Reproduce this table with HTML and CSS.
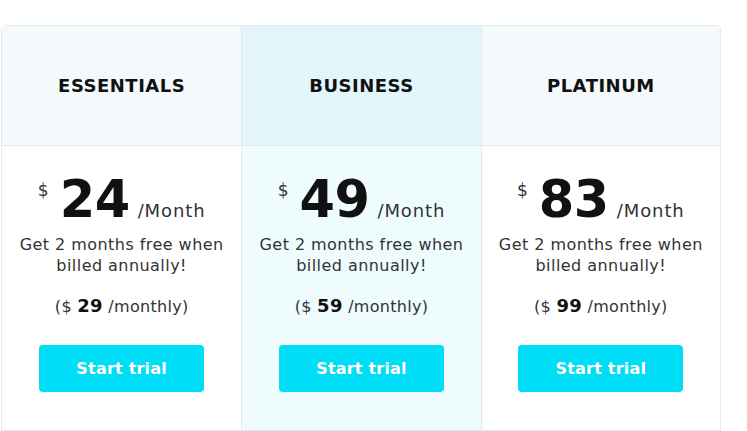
FILE: index.html
```html
<!DOCTYPE html>
<html lang="en">
<head>
<meta charset="utf-8">
<title>Pricing</title>
<link rel="stylesheet" href="styles.css">
</head>
<body>
<div class="pricing">
  <div class="plan">
    <div class="plan-head"><h2 class="plan-name">ESSENTIALS</h2></div>
    <div class="plan-body">
      <div class="price"><span class="cur">$</span><span class="amount">24</span><span class="per">/Month</span></div>
      <p class="note">Get 2 months free when billed annually!</p>
      <p class="monthly">($ <b>29</b> /monthly)</p>
      <a class="btn" href="#">Start trial</a>
    </div>
  </div>
  <div class="plan plan-featured">
    <div class="plan-head"><h2 class="plan-name">BUSINESS</h2></div>
    <div class="plan-body">
      <div class="price"><span class="cur">$</span><span class="amount">49</span><span class="per">/Month</span></div>
      <p class="note">Get 2 months free when billed annually!</p>
      <p class="monthly">($ <b>59</b> /monthly)</p>
      <a class="btn" href="#">Start trial</a>
    </div>
  </div>
  <div class="plan">
    <div class="plan-head"><h2 class="plan-name">PLATINUM</h2></div>
    <div class="plan-body">
      <div class="price"><span class="cur">$</span><span class="amount">83</span><span class="per">/Month</span></div>
      <p class="note">Get 2 months free when billed annually!</p>
      <p class="monthly">($ <b>99</b> /monthly)</p>
      <a class="btn" href="#">Start trial</a>
    </div>
  </div>
</div>
</body>
</html>
```
FILE: styles.css
```css
html, body {
  margin: 0;
  padding: 0;
  background: #ffffff;
}
body {
  font-family: "DejaVu Sans", sans-serif;
  color: #222;
}
.pricing {
  margin: 25px 0 0 1px;
  width: 720px;
  box-sizing: border-box;
  border: 1px solid #e4e9ee;
  border-radius: 5px 5px 0 0;
  display: grid;
  grid-template-columns: repeat(3, 1fr);
  overflow: hidden;
}
.plan + .plan {
  border-left: 1px solid #e4e9ee;
}
.plan-head {
  height: 119px;
  border-bottom: 1px solid #e4e9ee;
  background: #f4f9fc;
  display: flex;
  align-items: center;
  justify-content: center;
}
.plan-featured .plan-head {
  background: #e2f6fb;
}
.plan-featured .plan-body {
  background: #eefcfd;
}
.plan-name {
  margin: 0;
  font-size: 18px;
  font-weight: 700;
  color: #111;
  letter-spacing: 0.5px;
}
.plan-body {
  box-sizing: border-box;
  height: 284px;
  padding-top: 29px;
  display: flex;
  flex-direction: column;
  align-items: center;
  text-align: center;
}
.price {
  display: flex;
  align-items: baseline;
  height: 50px;
}
.cur {
  font-size: 17px;
  align-self: flex-start;
  margin-top: 5px;
  margin-right: 11px;
  color: #333;
}
.amount {
  font-size: 51px;
  font-weight: 700;
  color: #111;
  line-height: 50px;
  letter-spacing: -0.5px;
}
.per {
  font-size: 18px;
  margin-left: 8px;
  color: #333;
  letter-spacing: 0.9px;
}
.note {
  margin: 9px 0 0;
  width: 220px;
  font-size: 16px;
  line-height: 21px;
  color: #333;
  letter-spacing: 0.45px;
}
.monthly {
  margin: 19px 0 0;
  font-size: 16px;
  line-height: 21px;
  color: #333;
  letter-spacing: 0.3px;
}
.monthly b {
  font-size: 18px;
  color: #111;
}
.btn {
  margin-top: 28px;
  width: 165px;
  height: 47px;
  border-radius: 4px;
  background: #00ddf6;
  color: #fff;
  font-weight: 700;
  font-size: 16px;
  letter-spacing: 0.2px;
  text-decoration: none;
  display: flex;
  align-items: center;
  justify-content: center;
}
```
